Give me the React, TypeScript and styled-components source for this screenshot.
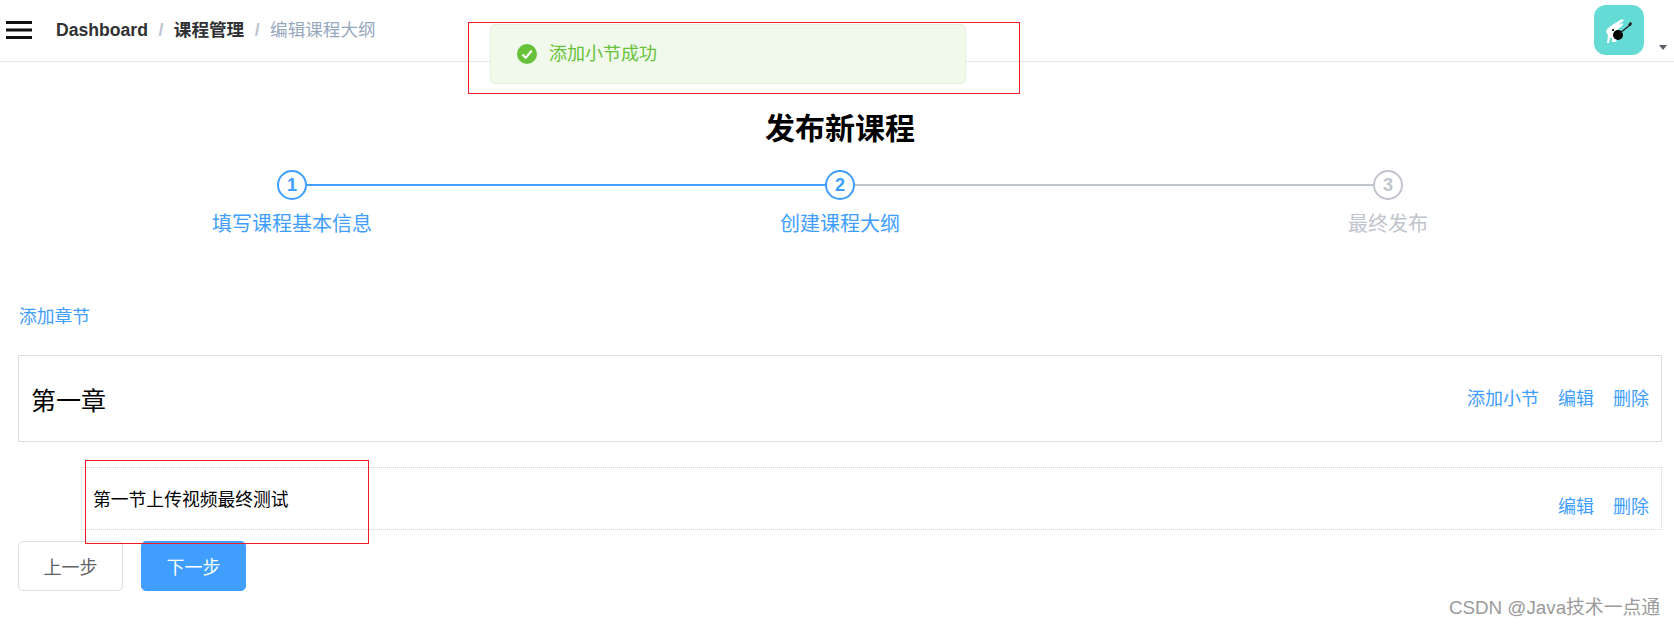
import * as React from 'react';
import styled, { createGlobalStyle } from 'styled-components';

const BLUE = '#409eff';
const GREY = '#c0c4cc';
const FONT = '"Liberation Sans", "Noto Sans CJK SC", sans-serif';

const steps = [
  { label: '填写课程基本信息', active: true },
  { label: '创建课程大纲', active: true },
  { label: '最终发布', active: false },
];

const App = () => {
  return (
    <Page>
      <GlobalStyle />
      <Navbar>
        <Hamburger viewBox="0 0 26 18">
          <path d="M0 1.5h26M0 9h26M0 16.5h26" stroke="#111" strokeWidth="3" fill="none" />
        </Hamburger>
        <Crumbs>
          <CrumbLink>Dashboard</CrumbLink>
          <CrumbSep>/</CrumbSep>
          <CrumbLink>课程管理</CrumbLink>
          <CrumbSep>/</CrumbSep>
          <CrumbCurrent>编辑课程大纲</CrumbCurrent>
        </Crumbs>
        <AvatarWrap>
          <Avatar>
            <svg width="50" height="50" viewBox="0 0 50 50">
              <path
                d="M13 24l5-4 10-6 2 1.5-6 4.5 5-2 0 2-6 5 1 6-2 6-4 0 0-4-2 0-1 5-2 0 1-8-2-3z"
                fill="#fff"
              />
              <circle cx="24" cy="30" r="5" fill="#000" />
              <path d="M26 28l10-8" stroke="#222" strokeWidth="1.5" />
              <path d="M34 20l2-3 2 1-1 3z" fill="#222" />
              <rect x="18" y="24" width="2" height="2" fill="#333" />
            </svg>
          </Avatar>
          <Caret />
        </AvatarWrap>
      </Navbar>

      <Toast>
        <svg width="20" height="20" viewBox="0 0 20 20">
          <circle cx="10" cy="10" r="10" fill="#67c23a" />
          <path d="M5.5 10.5l3.2 3.2 6-7" stroke="#fff" strokeWidth="2.2" fill="none" />
        </svg>
        <ToastText>添加小节成功</ToastText>
      </Toast>
      <RedBox $variant="toast" />

      <Main>
        <Title>发布新课程</Title>
        <Steps>
          {steps.map((step, i) => (
            <Step key={step.label}>
              <StepHead>
                <Segment $color={i === 0 ? 'transparent' : step.active ? BLUE : GREY} />
                <StepIcon $active={step.active}>{i + 1}</StepIcon>
                <Segment $color={i === 2 ? 'transparent' : i === 0 ? BLUE : GREY} />
              </StepHead>
              <StepLabel $active={step.active}>{step.label}</StepLabel>
            </Step>
          ))}
        </Steps>

        <AddChapter>添加章节</AddChapter>

        <ChapterRow>
          <ChapterTitle>第一章</ChapterTitle>
          <Actions>
            <ActionLink>添加小节</ActionLink>
            <ActionLink>编辑</ActionLink>
            <ActionLink>删除</ActionLink>
          </Actions>
        </ChapterRow>

        <SectionRow>
          <SectionTitle>第一节上传视频最终测试</SectionTitle>
          <SectionActions>
            <ActionLink>编辑</ActionLink>
            <ActionLink>删除</ActionLink>
          </SectionActions>
          <RedBox $variant="section" />
        </SectionRow>

        <Buttons>
          <Button>上一步</Button>
          <Button $primary>下一步</Button>
        </Buttons>
      </Main>

      <Watermark>CSDN @Java技术一点通</Watermark>
    </Page>
  );
};

const GlobalStyle = createGlobalStyle`
  html, body {
    margin: 0;
    padding: 0;
    background: #fff;
    font-family: ${FONT};
  }
`;

const Page = styled.div`
  position: relative;
  width: 1674px;
  height: 627px;
  overflow: hidden;
`;

const Navbar = styled.header`
  display: flex;
  align-items: center;
  height: 62px;
  box-sizing: border-box;
  border-bottom: 1px solid #e6e6e6;
  padding-left: 6px;
`;

const Hamburger = styled.svg`
  width: 26px;
  height: 18px;
  margin-right: 24px;
  margin-top: -2px;
`;

const Crumbs = styled.nav`
  display: flex;
  align-items: center;
  font-size: 17.6px;
  line-height: 24px;
  margin-top: -2px;
`;

const CrumbLink = styled.span`
  color: #303133;
  font-weight: 700;
`;

const CrumbSep = styled.span`
  color: #c0c4cc;
  font-weight: 700;
  margin: 0 10.5px;
`;

const CrumbCurrent = styled.span`
  color: #97a8be;
`;

const AvatarWrap = styled.div`
  display: flex;
  align-items: flex-end;
  margin-left: auto;
  margin-right: 7px;
  margin-top: -1px;
`;

const Avatar = styled.div`
  width: 50px;
  height: 50px;
  border-radius: 12px;
  background: #65dbd6;
  overflow: hidden;
`;

const Caret = styled.span`
  width: 0;
  height: 0;
  margin: 0 0 5px 15px;
  border-left: 4px solid transparent;
  border-right: 4px solid transparent;
  border-top: 5px solid #5a5e66;
`;

const Toast = styled.div`
  position: absolute;
  left: 490px;
  top: 24px;
  width: 476px;
  height: 60px;
  box-sizing: border-box;
  display: flex;
  align-items: center;
  gap: 12px;
  padding-left: 26px;
  background: #f0f9eb;
  border: 1px solid #e1f3d8;
  border-radius: 5px;
`;

const ToastText = styled.span`
  color: #67c23a;
  font-size: 18px;
  margin-top: -5px;
`;

const RedBox = styled.div<{ $variant: 'toast' | 'section' }>`
  position: absolute;
  box-sizing: border-box;
  border: 1px solid #ed1c24;
  ${(p) =>
    p.$variant === 'toast'
      ? 'left: 468px; top: 22px; width: 552px; height: 72px;'
      : 'left: 3px; top: -8px; width: 284px; height: 84px;'}
`;

const Main = styled.main`
  padding: 0 12px 0 18px;
`;

const Title = styled.h3`
  margin: 49px 0 0;
  font-size: 30px;
  line-height: 36px;
  font-weight: 700;
  text-align: center;
  color: #000;
`;

const Steps = styled.div`
  display: grid;
  grid-template-columns: repeat(3, 1fr);
  margin-top: 23px;
`;

const Step = styled.div`
  display: flex;
  flex-direction: column;
  align-items: center;
`;

const StepHead = styled.div`
  display: flex;
  align-items: center;
  width: 100%;
`;

const Segment = styled.div<{ $color: string }>`
  flex: 1;
  height: 2px;
  background: ${(p) => p.$color};
`;

const StepIcon = styled.div<{ $active: boolean }>`
  width: 30px;
  height: 30px;
  box-sizing: border-box;
  display: flex;
  align-items: center;
  justify-content: center;
  border-radius: 50%;
  border: 2px solid ${(p) => (p.$active ? BLUE : GREY)};
  color: ${(p) => (p.$active ? BLUE : GREY)};
  font-size: 18px;
  font-weight: 700;
`;

const StepLabel = styled.div<{ $active: boolean }>`
  margin-top: 10px;
  font-size: 20px;
  line-height: 28px;
  color: ${(p) => (p.$active ? BLUE : GREY)};
`;

const AddChapter = styled.a`
  display: block;
  margin: 67px 0 0 1px;
  font-size: 17.8px;
  line-height: 24px;
  color: ${BLUE};
`;

const ChapterRow = styled.div`
  display: flex;
  align-items: center;
  justify-content: space-between;
  height: 87px;
  box-sizing: border-box;
  margin-top: 26px;
  padding: 0 12px 0 12px;
  border: 1px solid #dddddd;
`;

const ChapterTitle = styled.span`
  font-size: 25px;
  color: #000;
`;

const Actions = styled.div`
  display: flex;
  gap: 19px;
`;

const ActionLink = styled.a`
  font-size: 18px;
  line-height: 24px;
  color: ${BLUE};
`;

const SectionRow = styled.div`
  position: relative;
  display: flex;
  justify-content: space-between;
  height: 63px;
  box-sizing: border-box;
  margin: 25px 0 0 63px;
  padding: 20px 12px 0 11px;
  border: 1px dotted #d4d4d4;
`;

const SectionTitle = styled.span`
  font-size: 17.8px;
  line-height: 24px;
  color: #000;
`;

const SectionActions = styled(Actions)`
  margin-top: 7px;
`;

const Buttons = styled.div`
  display: flex;
  gap: 18px;
  margin-top: 11px;
`;

const Button = styled.button<{ $primary?: boolean }>`
  width: 105px;
  height: 50px;
  box-sizing: border-box;
  border-radius: 5px;
  border: 1px solid ${(p) => (p.$primary ? BLUE : '#dcdfe6')};
  background: ${(p) => (p.$primary ? BLUE : '#fff')};
  color: ${(p) => (p.$primary ? '#fff' : '#606266')};
  font-family: ${FONT};
  font-size: 18px;
`;

const Watermark = styled.div`
  position: absolute;
  right: 14px;
  bottom: 7px;
  font-size: 18.8px;
  line-height: 24px;
  color: #9a9a9a;
`;

export default App;
